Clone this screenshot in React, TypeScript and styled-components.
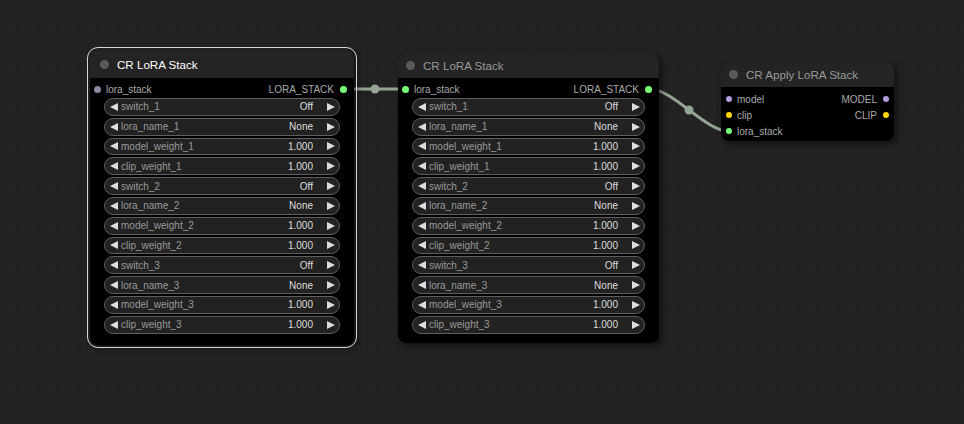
import styled, { createGlobalStyle } from 'styled-components';

const GlobalStyle = createGlobalStyle`
  html, body {
    margin: 0;
    padding: 0;
    background: #222;
  }
  body {
    font-family: Arial, "Liberation Sans", sans-serif;
  }
`;

const LINK = '#93a493';

const slotColors: Record<string, string> = {
    LORA_STACK: '#7f7',
    LORA_IDLE: '#8a88a0',
    MODEL: '#b39ddb',
    CLIP: '#ffd500',
};

const widgets = [
    { label: 'switch_1', value: 'Off' },
    { label: 'lora_name_1', value: 'None' },
    { label: 'model_weight_1', value: '1.000' },
    { label: 'clip_weight_1', value: '1.000' },
    { label: 'switch_2', value: 'Off' },
    { label: 'lora_name_2', value: 'None' },
    { label: 'model_weight_2', value: '1.000' },
    { label: 'clip_weight_2', value: '1.000' },
    { label: 'switch_3', value: 'Off' },
    { label: 'lora_name_3', value: 'None' },
    { label: 'model_weight_3', value: '1.000' },
    { label: 'clip_weight_3', value: '1.000' },
];

type StackProps = {
    x: number;
    y: number;
    w: number;
    titleH: number;
    bottom: number;
    dotLeft: number;
    selected?: boolean;
    inputConnected?: boolean;
};

const LoraStackNode = ({ x, y, w, titleH, bottom, dotLeft, selected, inputConnected }: StackProps) => {
    return (
        <Node $x={x} $y={y} $w={w} $selected={selected}>
            <TitleBar $h={titleH} $left={dotLeft}>
                <TitleDot />
                <Title $active={selected}>CR LoRA Stack</Title>
            </TitleBar>
            <Body $pad={`2px 0 ${bottom}px 0`}>
                <SlotRow $h={18}>
                    <Slot>
                        <Dot $color={inputConnected ? slotColors.LORA_STACK : slotColors.LORA_IDLE} />
                        <SlotLabel>lora_stack</SlotLabel>
                    </Slot>
                    <Slot $out>
                        <SlotLabel>LORA_STACK</SlotLabel>
                        <Dot $color={slotColors.LORA_STACK} />
                    </Slot>
                </SlotRow>
                {widgets.map((wd) => (
                    <Widget key={wd.label}>
                        <ArrowLeft />
                        <WidgetLabel>{wd.label}</WidgetLabel>
                        <WidgetValue>{wd.value}</WidgetValue>
                        <ArrowRight />
                    </Widget>
                ))}
            </Body>
        </Node>
    );
};

const ApplyNode = () => {
    return (
        <Node $x={721} $y={62} $w={173}>
            <TitleBar $h={25} $left={8}>
                <TitleDot />
                <Title>CR Apply LoRA Stack</Title>
            </TitleBar>
            <Body $pad="4px 0 2px 0">
                <SlotRow $h={16} $small>
                    <Slot>
                        <Dot $color={slotColors.MODEL} $size={6} />
                        <SlotLabel>model</SlotLabel>
                    </Slot>
                    <Slot $out>
                        <SlotLabel>MODEL</SlotLabel>
                        <Dot $color={slotColors.MODEL} $size={6} />
                    </Slot>
                </SlotRow>
                <SlotRow $h={16} $small>
                    <Slot>
                        <Dot $color={slotColors.CLIP} $size={6} />
                        <SlotLabel>clip</SlotLabel>
                    </Slot>
                    <Slot $out>
                        <SlotLabel>CLIP</SlotLabel>
                        <Dot $color={slotColors.CLIP} $size={6} />
                    </Slot>
                </SlotRow>
                <SlotRow $h={16} $small>
                    <Slot>
                        <Dot $color={slotColors.LORA_STACK} $size={6} />
                        <SlotLabel>lora_stack</SlotLabel>
                    </Slot>
                </SlotRow>
            </Body>
        </Node>
    );
};

const Links = () => {
    // curve from stack 2 output to apply node input, litegraph style
    const a = { x: 650, y: 89 };
    const b = { x: 728, y: 131 };
    const d = Math.hypot(b.x - a.x, b.y - a.y) * 0.25;
    return (
        <LinkLayer width={964} height={424}>
            <line x1={344} y1={89} x2={406} y2={89} stroke={LINK} strokeWidth={3} />
            <circle cx={375} cy={89} r={4.5} fill={LINK} />
            <path
                d={`M${a.x} ${a.y} C${a.x + d} ${a.y} ${b.x - d} ${b.y} ${b.x} ${b.y}`}
                stroke={LINK}
                strokeWidth={3}
                fill="none"
            />
            <circle cx={689} cy={110} r={4.5} fill={LINK} />
        </LinkLayer>
    );
};

const App = () => {
    return (
        <>
            <GlobalStyle />
            <Canvas>
                <Links />
                <LoraStackNode x={90} y={50} w={264} titleH={28} bottom={9} dotLeft={10} selected />
                <LoraStackNode x={398} y={53} w={261} titleH={25} bottom={7} dotLeft={8} inputConnected />
                <ApplyNode />
            </Canvas>
        </>
    );
};

const Canvas = styled.div`
    position: relative;
    width: 964px;
    height: 424px;
    overflow: hidden;
    background-color: #232323;
    background-image: linear-gradient(to right, rgba(0, 0, 0, 0.1) 1px, transparent 1px),
        linear-gradient(to bottom, rgba(0, 0, 0, 0.1) 1px, transparent 1px);
    background-size: 10px 10px;
    background-position: 7px 3px;
`;

const LinkLayer = styled.svg`
    position: absolute;
    left: 0;
    top: 0;
`;

const Node = styled.div<{ $x: number; $y: number; $w: number; $selected?: boolean }>`
    position: absolute;
    left: ${({ $x }) => $x}px;
    top: ${({ $y }) => $y}px;
    width: ${({ $w }) => $w}px;
    border-radius: 8px;
    background: #000;
    box-shadow: 3px 3px 6px rgba(0, 0, 0, 0.5);
    &::after {
        content: '';
        display: ${({ $selected }) => ($selected ? 'block' : 'none')};
        position: absolute;
        inset: -3px;
        border: 1px solid #d8d8d8;
        border-radius: 11px;
        pointer-events: none;
    }
`;

const TitleBar = styled.div<{ $h: number; $left: number }>`
    height: ${({ $h }) => $h}px;
    display: flex;
    align-items: center;
    gap: 8px;
    padding-left: ${({ $left }) => $left}px;
    background: #242424;
    border-radius: 8px 8px 0 0;
`;

const TitleDot = styled.span`
    width: 9px;
    height: 9px;
    border-radius: 50%;
    background: #5a5a5a;
`;

const Title = styled.span<{ $active?: boolean }>`
    font-size: 11.6px;
    color: ${({ $active }) => ($active ? '#fff' : '#999')};
    white-space: nowrap;
`;

const Body = styled.div<{ $pad: string }>`
    padding: ${({ $pad }) => $pad};
`;

const SlotRow = styled.div<{ $h: number; $small?: boolean }>`
    height: ${({ $h }) => $h}px;
    display: flex;
    align-items: center;
    justify-content: space-between;
    padding: ${({ $small }) => ($small ? '0 5px 0 5px' : '0 7px 0 4px')};
`;

const Slot = styled.div<{ $out?: boolean }>`
    display: flex;
    align-items: center;
    gap: ${({ $out }) => ($out ? '6px' : '5px')};
`;

const Dot = styled.span<{ $color: string; $size?: number }>`
    width: ${({ $size }) => $size ?? 7}px;
    height: ${({ $size }) => $size ?? 7}px;
    border-radius: 50%;
    background: ${({ $color }) => $color};
`;

const SlotLabel = styled.span`
    font-size: 10px;
    color: #aaa;
    white-space: nowrap;
`;

const Widget = styled.div`
    box-sizing: border-box;
    height: 17.8px;
    margin: 0 14px 2px 14px;
    display: flex;
    align-items: center;
    padding: 0 4px 0 5px;
    border: 1px solid #5e5e5e;
    border-radius: 9px;
    background: #222;
    font-size: 10px;
`;

const ArrowLeft = styled.span`
    width: 0;
    height: 0;
    border-top: 4.5px solid transparent;
    border-bottom: 4.5px solid transparent;
    border-right: 8px solid #ddd;
`;

const ArrowRight = styled.span`
    width: 0;
    height: 0;
    margin-left: 14px;
    border-top: 4.5px solid transparent;
    border-bottom: 4.5px solid transparent;
    border-left: 8px solid #ddd;
`;

const WidgetLabel = styled.span`
    flex: 1;
    margin-left: 3px;
    color: #999;
    white-space: nowrap;
`;

const WidgetValue = styled.span`
    color: #ddd;
`;

export default App;
